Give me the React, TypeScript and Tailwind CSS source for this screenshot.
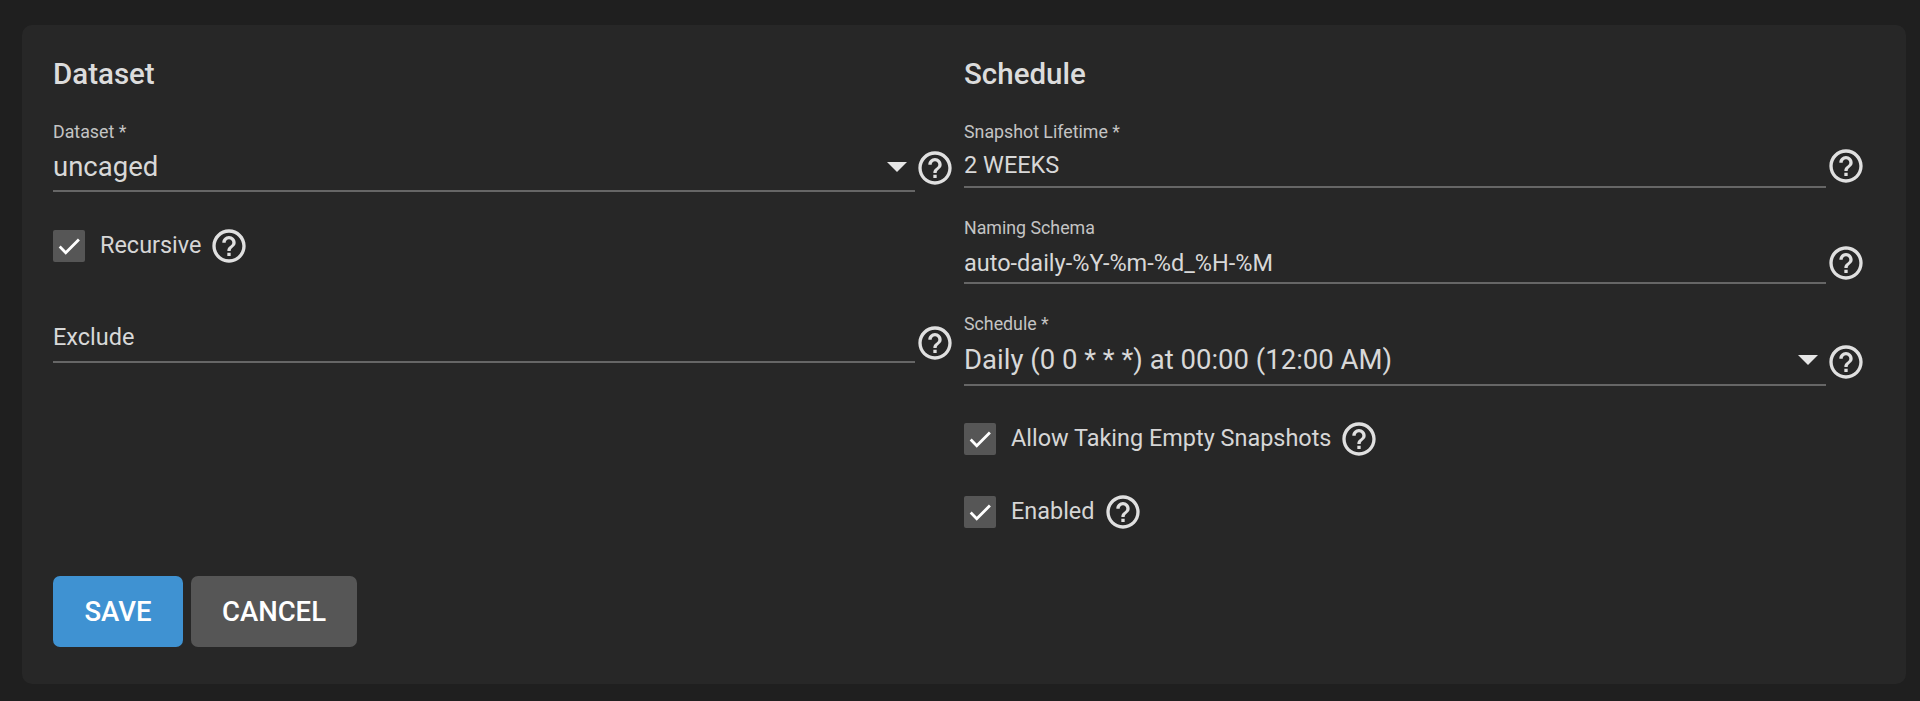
const HELP_PATH =
  'M11 18h2v-2h-2v2zm1-16C6.48 2 2 6.48 2 12s4.48 10 10 10 10-4.48 10-10S17.52 2 12 2zm0 18c-4.41 0-8-3.59-8-8s3.59-8 8-8 8 3.59 8 8-3.59 8-8 8zm0-14c-2.21 0-4 1.79-4 4h2c0-1.1.9-2 2-2s2 .9 2 2c0 2-3 1.75-3 5h2c0-2.25 3-2.5 3-5 0-2.21-1.79-4-4-4z';

function Help({ className = '' }: { className?: string }) {
  return (
    <svg viewBox="0 0 24 24" className={`w-10 h-10 shrink-0 fill-[#e0e0e0] ${className}`}>
      <path d={HELP_PATH} />
    </svg>
  );
}

function Arrow() {
  return (
    <svg viewBox="0 0 20 10" className="w-5 h-2.5 shrink-0 fill-[#e6e6e6]">
      <path d="M0 0h20L10 10z" />
    </svg>
  );
}

function Check({ label, className = '' }: { label: string; className?: string }) {
  return (
    <div className={`flex items-center h-8 ${className}`}>
      <div className="w-8 h-8 rounded-[2px] bg-[#565656] flex items-center justify-center">
        <svg viewBox="0 0 24 24" className="w-7 h-7 fill-none stroke-white stroke-[2.4]">
          <path d="M4 12.5l5.2 5.2L20.5 6.5" />
        </svg>
      </div>
      <span className="ml-[15px] text-[23.45px] text-[#d6d6d6]">{label}</span>
      <Help className="ml-2" />
    </div>
  );
}

type FieldProps = {
  label?: string;
  value: string;
  select?: boolean;
  height: string;
  valueClass: string;
  helpClass: string;
  className?: string;
};

function Field({ label, value, select, height, valueClass, helpClass, className = '' }: FieldProps) {
  return (
    <div className={`flex items-end ${className}`}>
      <div className={`w-[862px] shrink-0 flex flex-col border-b-2 border-[#666666] ${height}`}>
        {label && <div className="text-[17.8px] leading-5 text-[#c4c4c4]">{label}</div>}
        <div className={`flex items-center justify-between leading-8 text-[#d8d8d8] ${valueClass}`}>
          <span>{value}</span>
          {select && (
            <span className="mr-2">
              <Arrow />
            </span>
          )}
        </div>
      </div>
      <Help className={helpClass} />
    </div>
  );
}

export default function App() {
  return (
    <div className="min-h-[701px] bg-[#1f1f1f] pt-[25px] pl-[22px] font-['Roboto',sans-serif]">
      <form className="w-[1884px] h-[659px] bg-[#272727] rounded-[10px] pt-[33px] pl-[31px] pb-[37px] flex flex-col">
        <div className="grid grid-cols-[911px_1fr]">
          <section>
            <h2 className="text-[29.5px] leading-8 font-medium text-[#dcdcdc]">Dataset</h2>
            <Field
              label="Dataset *"
              value="uncaged"
              select
              height="h-[70px]"
              valueClass="text-[27.5px] h-[48px] pt-[2px]"
              helpClass="mb-1"
              className="mt-8"
            />
            <Check label="Recursive" className="mt-[38px]" />
            <Field
              value="Exclude"
              height="h-[52px]"
              valueClass="text-[23.5px] h-[50px] pt-[2px]"
              helpClass="mb-0"
              className="mt-[49px]"
            />
          </section>
          <section>
            <h2 className="text-[29.5px] leading-8 font-medium text-[#dcdcdc]">Schedule</h2>
            <Field
              label="Snapshot Lifetime *"
              value="2 WEEKS"
              height="h-[66px]"
              valueClass="text-[23.5px] h-[44px] pt-[2px]"
              helpClass="mb-0.5"
              className="mt-8"
            />
            <Field
              label="Naming Schema"
              value="auto-daily-%Y-%m-%d_%H-%M"
              height="h-[66px]"
              valueClass="text-[23.5px] h-[44px] pt-[5px]"
              helpClass="mb-px"
              className="mt-[30px]"
            />
            <Field
              label="Schedule *"
              value="Daily (0 0 * * *) at 00:00 (12:00 AM)"
              select
              height="h-[72px]"
              valueClass="text-[27.5px] h-[50px] pt-[2px]"
              helpClass="mb-1"
              className="mt-[30px]"
            />
            <Check label="Allow Taking Empty Snapshots" className="mt-[37px]" />
            <Check label="Enabled" className="mt-[41px]" />
          </section>
        </div>
        <div className="mt-auto flex gap-2">
          <button type="button" className="w-[130px] h-[71px] rounded-[7px] bg-[#3f92d2] text-white text-[27.5px] font-medium">
            SAVE
          </button>
          <button type="button" className="w-[166px] h-[71px] rounded-[7px] bg-[#565656] text-white text-[27.5px] font-medium">
            CANCEL
          </button>
        </div>
      </form>
    </div>
  );
}
